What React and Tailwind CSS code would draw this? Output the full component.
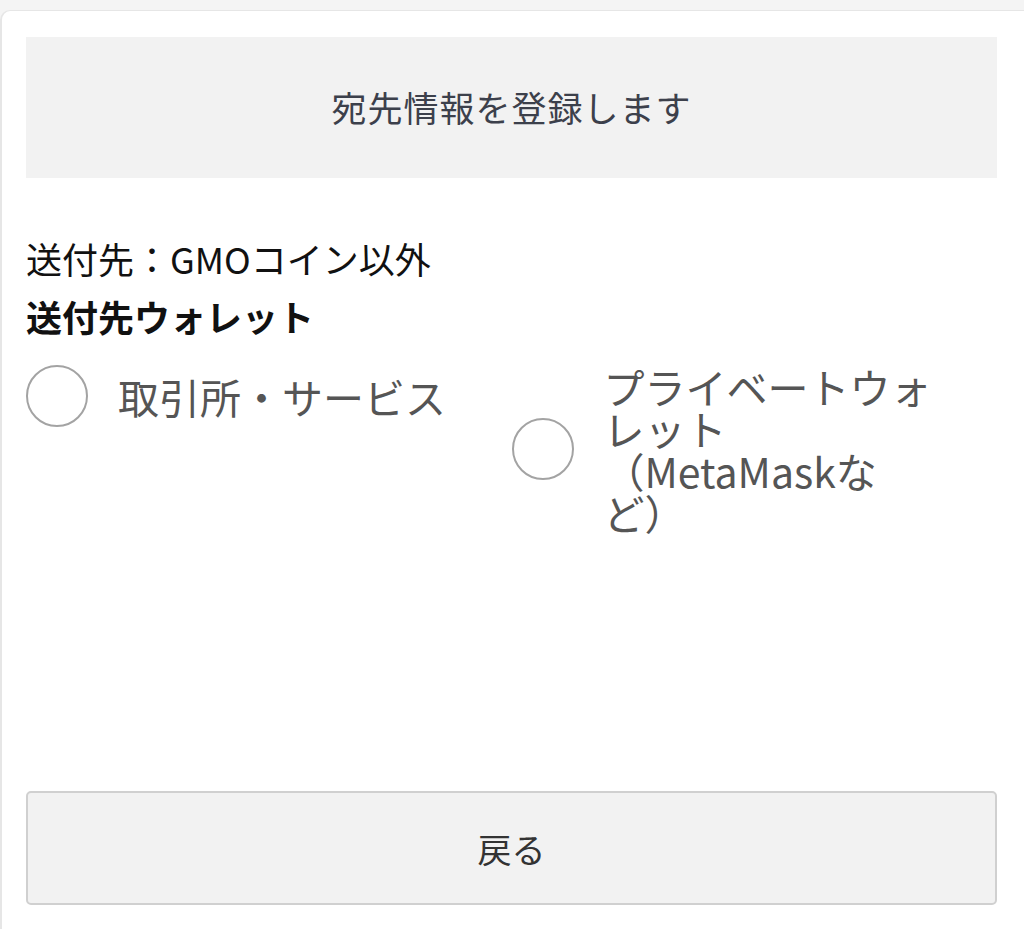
const FONT = "font-['Hiragino_Sans','Noto_Sans_CJK_JP',sans-serif]";

function RadioOption({ lines }) {
  return (
    <label className="flex items-center gap-[30px] cursor-pointer">
      <span className="block w-[62px] h-[62px] shrink-0 rounded-full border-[2.5px] border-[#a3a3a3] bg-white" />
      <span className="text-[41px] leading-[42px] text-[#555555]">
        {lines.map((line) => (
          <span key={line} className="block whitespace-nowrap">
            {line}
          </span>
        ))}
      </span>
    </label>
  );
}

export default function App() {
  return (
    <div className={`min-h-screen bg-[#f4f4f4] pt-[10px] ${FONT}`}>
      <div className="h-[919px] bg-white rounded-tl-[10px] border-l-2 border-t border-[#e6e6e6] flex flex-col pl-[24px] pr-[27px] pt-[26px] pb-[24px]">

        {/* ヘッダー */}
        <div className="h-[141px] bg-[#f2f2f2] flex items-center justify-center">
          <h1 className="text-[35px] text-[#3c404b] tracking-[1px]">宛先情報を登録します</h1>
        </div>

        <p className="mt-[51px] text-[36px] leading-[58px] text-[#111]">送付先：GMOコイン以外</p>
        <p className="text-[36px] leading-[58px] font-bold text-[#111]">送付先ウォレット</p>

        {/* ラジオ */}
        <div className="mt-[20px] grid grid-cols-2 items-start">
          <RadioOption lines={["取引所・サービス"]} />
          <RadioOption lines={["プライベートウォ", "レット", "（MetaMaskな", "ど）"]} />
        </div>

        <div className="flex-1" />

        <button className="h-[114px] w-full rounded-[5px] border-2 border-[#d0d0d0] bg-[#f2f2f2] text-[34px] text-[#333]">
          戻る
        </button>
      </div>
    </div>
  );
}
